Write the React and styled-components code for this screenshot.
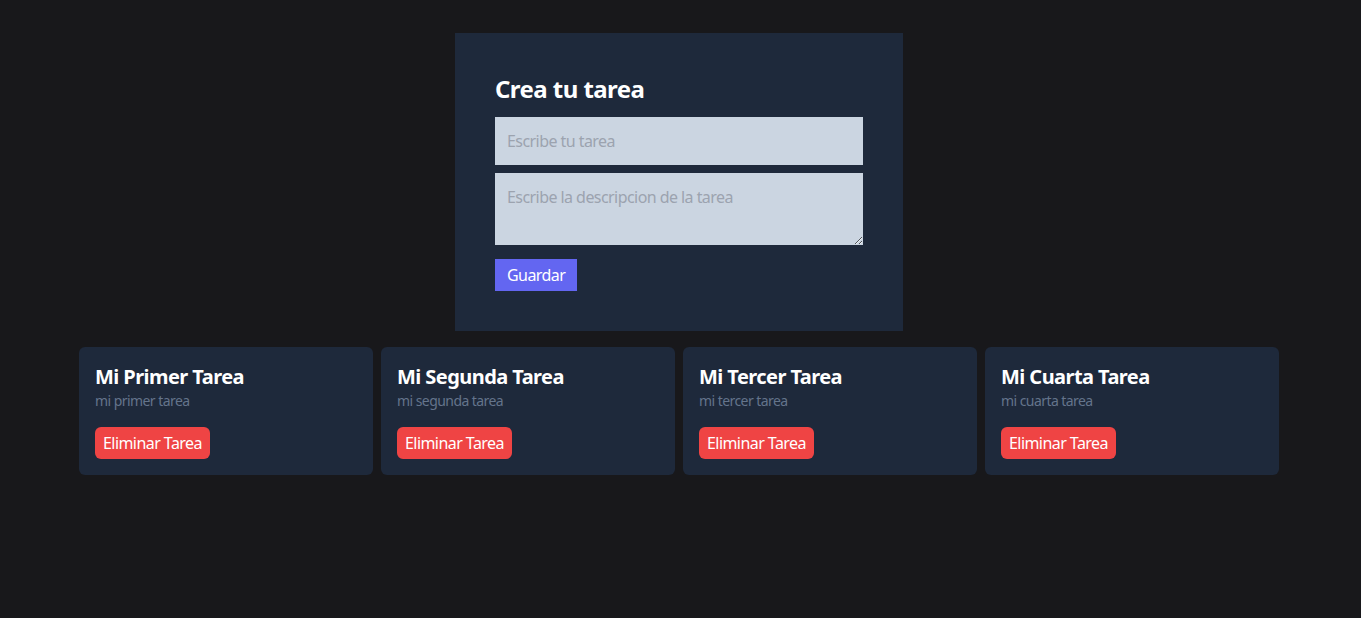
import React from "react"
import styled, { createGlobalStyle } from "styled-components"

const GlobalStyle = createGlobalStyle`
  * {
    box-sizing: border-box;
  }

  html, body {
    margin: 0;
    padding: 0;
    background: #18181b;
    font-family: "Segoe UI", "Noto Sans", "Open Sans", sans-serif;
    letter-spacing: -0.035em;
    color: #fff;
  }
`

const Page = styled.main`
  min-height: 618px;
  padding: 33px 3px 0 0;
`

const Form = styled.form`
  width: 448px;
  margin: 0 auto 16px;
  padding: 40px;
  background: #1e293b;
`

const FormTitle = styled.h1`
  margin: 0 0 12px;
  font-size: 24px;
  line-height: 32px;
  font-weight: 700;
`

const Field = styled.input`
  display: block;
  width: 100%;
  margin: 0 0 8px;
  padding: 12px;
  border: 0;
  outline: none;
  background: #cbd5e1;
  font: inherit;
  font-size: 16px;
  line-height: 24px;
  letter-spacing: inherit;
  color: #111;

  &::placeholder {
    color: #9ca3af;
  }
`

const Area = styled(Field).attrs({ as: "textarea" })`
  display: inline-block;
  height: 72px;
  resize: vertical;
  margin-bottom: 14px;
  vertical-align: top;
`

const SaveButton = styled.button`
  display: block;
  padding: 4px 12px;
  border: 0;
  background: #6366f1;
  color: #fff;
  font: inherit;
  font-size: 16px;
  line-height: 24px;
  letter-spacing: inherit;
  cursor: pointer;
`

const Grid = styled.ul`
  list-style: none;
  display: grid;
  grid-template-columns: repeat(4, 1fr);
  gap: 8px;
  width: 1200px;
  margin: 0 auto;
  padding: 0;
`

const Card = styled.li`
  padding: 16px;
  border-radius: 6px;
  background: #1e293b;
`

const CardTitle = styled.h2`
  margin: 0;
  font-size: 20px;
  line-height: 28px;
  font-weight: 700;
`

const CardText = styled.p`
  margin: 0;
  font-size: 14px;
  line-height: 20px;
  color: #64748b;
`

const DeleteButton = styled.button`
  margin-top: 16px;
  padding: 4px 8px;
  border: 0;
  border-radius: 6px;
  background: #ef4444;
  color: #fff;
  font: inherit;
  font-size: 16px;
  line-height: 24px;
  letter-spacing: inherit;
  cursor: pointer;
`

const tasks = [
  { id: 1, title: "Mi Primer Tarea", description: "mi primer tarea" },
  { id: 2, title: "Mi Segunda Tarea", description: "mi segunda tarea" },
  { id: 3, title: "Mi Tercer Tarea", description: "mi tercer tarea" },
  { id: 4, title: "Mi Cuarta Tarea", description: "mi cuarta tarea" },
]

function App() {
  return (
    <Page>
      <GlobalStyle />
      <Form onSubmit={e => e.preventDefault()}>
        <FormTitle>Crea tu tarea</FormTitle>
        <Field placeholder="Escribe tu tarea" />
        <Area placeholder="Escribe la descripcion de la tarea" />
        <SaveButton>Guardar</SaveButton>
      </Form>
      <Grid>
        {tasks.map(task => (
          <Card key={task.id}>
            <CardTitle>{task.title}</CardTitle>
            <CardText>{task.description}</CardText>
            <DeleteButton>Eliminar Tarea</DeleteButton>
          </Card>
        ))}
      </Grid>
    </Page>
  )
}

export default App
